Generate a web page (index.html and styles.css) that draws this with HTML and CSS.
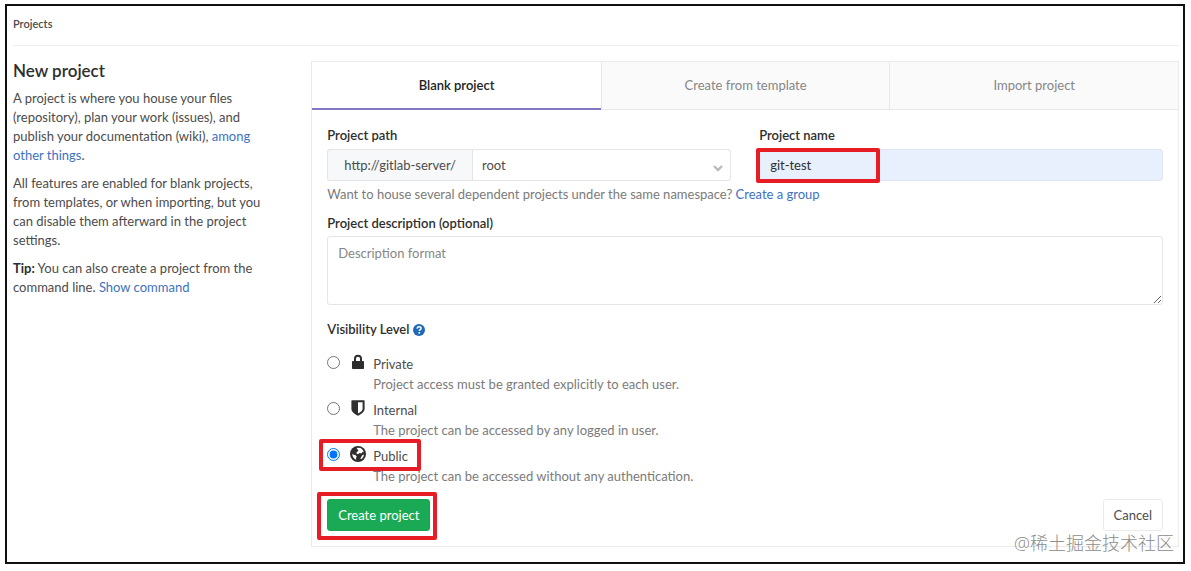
FILE: index.html
```html
<!DOCTYPE html>
<html lang="en">
<head>
    <meta charset="UTF-8">
    <meta name="viewport" content="width=device-width, initial-scale=1.0">
    <title>New project</title>
    <link rel="stylesheet" href="styles.css">
</head>
<body>
    <div class="page">
        <header class="breadcrumbs"><a href="#">Projects</a></header>

        <div class="columns">
            <aside class="sidebar">
                <h1>New project</h1>
                <p>A project is where you house your files (repository), plan your work (issues), and publish your documentation (wiki), <a href="#">among other things</a>.</p>
                <p>All features are enabled for blank projects, from templates, or when importing, but you can disable them afterward in the project settings.</p>
                <p><strong>Tip:</strong> You can also create a project from the command line. <a href="#">Show command</a></p>
            </aside>

            <main class="panel">
                <nav class="tabs">
                    <a href="#" class="tab active">Blank project</a>
                    <a href="#" class="tab">Create from template</a>
                    <a href="#" class="tab">Import project</a>
                </nav>

                <form class="project-form">
                    <div class="fields">
                        <div class="field">
                            <label for="namespace">Project path</label>
                            <div class="path-group">
                                <span class="prefix">http://gitlab-server/</span>
                                <div class="select-wrap">
                                    <select id="namespace">
                                        <option>root</option>
                                    </select>
                                    <svg class="chevron" viewBox="0 0 10 8" width="10" height="8"><path d="M1 2l4 4 4-4" fill="none" stroke="#bbb" stroke-width="2.4"/></svg>
                                </div>
                            </div>
                        </div>
                        <div class="field">
                            <label for="name">Project name</label>
                            <div class="name-group">
                                <input type="text" id="name" class="name-input" value="git-test">
                                <span class="mark mark-name"></span>
                            </div>
                        </div>
                    </div>
                    <p class="help">Want to house several dependent projects under the same namespace? <a href="#">Create a group</a></p>

                    <label for="description" class="description-label">Project description (optional)</label>
                    <textarea id="description" placeholder="Description format"></textarea>

                    <fieldset class="visibility">
                        <legend>Visibility Level
                            <a href="#" class="help-icon" aria-label="Help">
                                <svg viewBox="0 0 12 12" width="12" height="12"><circle cx="6" cy="6" r="6" fill="#1f69b8"/><path d="M4.1 4.6C4.2 3.3 5 2.8 6.1 2.8c1.1 0 1.9.6 1.9 1.6C8 5.6 6.3 5.6 6.3 7.1" fill="none" stroke="#fff" stroke-width="1.5"/><rect x="5.4" y="8" width="1.7" height="1.6" fill="#fff"/></svg>
                            </a>
                        </legend>

                        <div class="option">
                            <input type="radio" name="visibility" id="private">
                            <svg class="icon" viewBox="0 0 16 16" width="16" height="16"><path d="M4 7V4.8a4 4 0 0 1 8 0V7h1.2c.5 0 .8.3.8.8v6.4c0 .5-.3.8-.8.8H2.8c-.5 0-.8-.3-.8-.8V7.8c0-.5.3-.8.8-.8zm2 0h4V4.8a2 2 0 0 0-4 0z" fill="#2e2e2e"/></svg>
                            <label for="private">Private</label>
                            <p>Project access must be granted explicitly to each user.</p>
                        </div>
                        <div class="option">
                            <input type="radio" name="visibility" id="internal">
                            <svg class="icon" viewBox="0 0 16 16" width="16" height="16"><path d="M1.4.8c0-.4.3-.6.6-.6h12c.4 0 .6.2.6.6v8c0 3.2-3.6 5.6-6.6 7-3-1.4-6.6-3.8-6.6-7zM8 2.2v11.4c2.400-1.200 4.600-2.800 4.600-4.800V2.200z" fill="#2e2e2e"/></svg>
                            <label for="internal">Internal</label>
                            <p>The project can be accessed by any logged in user.</p>
                        </div>
                        <div class="option">
                            <input type="radio" name="visibility" id="public" checked>
                            <svg class="icon" viewBox="0 0 16 16" width="16" height="16"><circle cx="8" cy="8" r="8" fill="#2e2e2e"/><path d="M7.400 1.800l3.200.3 2 1.700 1.300 2.400-1.500-.3-1 1.500-1.800-.5-1.600 1.300-1.500-.8.200-1.500 1.700-1-.4-1.500-1.400-.4zM2 7.800l1.600.9 1.800.4 1.300 1.500-.8 1.400.5 1.800-1.700-.8-1.700-2zM12.300 9.300l1.700-.7-.6 2.300-1.800 2-1.200.2.600-1.800z" fill="#fff"/></svg>
                            <label for="public">Public</label>
                            <p>The project can be accessed without any authentication.</p>
                            <span class="mark mark-public"></span>
                        </div>
                    </fieldset>

                    <div class="actions">
                        <div class="create-wrap">
                            <button type="submit" class="btn btn-create">Create project</button>
                            <span class="mark mark-create"></span>
                        </div>
                        <button type="button" class="btn btn-cancel">Cancel</button>
                    </div>
                </form>
            </main>
        </div>
        <div class="watermark">@稀土掘金技术社区</div>
    </div>
</body>
</html>
```
FILE: styles.css
```css
* {
    box-sizing: border-box;
}

body {
    margin: 4px 6px 0 5px;
    background-color: #fff;
    color: #4c4c4c;
    font: 13px/19px Lato, "Open Sans", sans-serif;
}

a {
    color: #3e72bf;
    text-decoration: none;
}

p {
    margin: 0;
}

.page {
    position: relative;
    padding: 0 4px 15px 6px;
    border: 2px solid #111;
}

/* Header */
.breadcrumbs {
    padding: 8px 0 12px;
    border-bottom: 1px solid #eee;
    font-size: 11px;
    font-weight: 600;
}

.breadcrumbs a {
    color: #4c4c4c;
}

.columns {
    display: grid;
    grid-template-columns: 1fr 3fr;
    gap: 9px;
    margin-top: 15px;
}

/* Sidebar */
.sidebar {
    padding-right: 30px;
}

.sidebar h1 {
    margin: 0 0 8px;
    color: #2e2e2e;
    font-size: 17px;
    font-weight: 600;
    line-height: 20px;
}

.sidebar p {
    margin-bottom: 9px;
}

.sidebar strong {
    color: #2e2e2e;
}

/* Panel */
.panel {
    border: 1px solid #ebebeb;
}

.tabs {
    display: grid;
    grid-template-columns: repeat(3, 1fr);
}

.tab {
    padding: 14px 0;
    border-left: 1px solid #e8e8e8;
    border-bottom: 1px solid #e8e8e8;
    background-color: #fafafa;
    color: #868686;
    text-align: center;
}

.tab.active {
    padding-bottom: 13px;
    border-left: none;
    border-bottom: 2px solid #8078c4;
    background-color: #fff;
    color: #222;
    font-weight: 600;
}

.project-form {
    padding: 16px 15px 15px;
}

.fields {
    display: grid;
    grid-template-columns: 1fr 1fr;
    gap: 28px;
}

.field > label,
.description-label,
.visibility legend {
    display: block;
    padding: 0;
    color: #2e2e2e;
    font-weight: 600;
}

.path-group,
.name-group {
    display: flex;
    position: relative;
    height: 32px;
    margin-top: 4px;
}

.prefix {
    padding: 6px 16px;
    border: 1px solid #e5e5e5;
    border-right: none;
    border-radius: 3px 0 0 3px;
    background-color: #f7f8f9;
}

.select-wrap {
    display: flex;
    flex: 1;
    position: relative;
}

.select-wrap select {
    flex: 1;
    padding: 0 9px;
    border: 1px solid #e5e5e5;
    border-radius: 0 3px 3px 0;
    background-color: #fff;
    color: #4c4c4c;
    font: inherit;
    appearance: none;
}

.chevron {
    position: absolute;
    top: 15px;
    right: 8px;
}

.name-input {
    flex: 1;
    min-width: 0;
    padding: 0 10px;
    border: 1px solid #dfe5f1;
    border-radius: 3px;
    background-color: #e8effd;
    color: #2e2e2e;
    font: inherit;
}

.help {
    margin: 4px 0 10px;
    color: #7b7b7b;
}

textarea {
    display: block;
    width: 100%;
    height: 69px;
    margin-top: 3px;
    padding: 7px 10px;
    border: 1px solid #e5e5e5;
    border-radius: 3px;
    font: inherit;
    resize: vertical;
}

textarea::placeholder {
    color: #868686;
}

/* Visibility options */
.visibility {
    margin: 15px 0 0;
    padding: 0;
    border: none;
}

.visibility legend {
    margin-bottom: 15px;
}

.help-icon svg {
    vertical-align: -2px;
}

.option {
    display: grid;
    position: relative;
    grid-template-columns: 23px 23px 1fr;
    margin-bottom: 6px;
    line-height: 20px;
}

.option input {
    width: 13px;
    height: 13px;
    margin: 2px 0 0;
}

.option p {
    grid-column: 3;
    color: #7b7b7b;
}

/* Buttons */
.actions {
    display: flex;
    justify-content: space-between;
    margin-top: 7px;
}

.create-wrap {
    position: relative;
}

.btn {
    height: 32px;
    padding: 0 10px;
    border: 1px solid #ebebeb;
    border-radius: 3px;
    background-color: #fff;
    color: #4c4c4c;
    font: inherit;
}

.btn-create {
    border-color: #1aa351;
    background-color: #1aaa55;
    color: #fff;
}

/* Red highlight boxes */
.mark {
    position: absolute;
    border: 4px solid #e81c24;
    border-radius: 2px;
    pointer-events: none;
}

.mark-name {
    top: -1px;
    left: -3px;
    width: 124px;
    height: 35px;
}

.mark-public {
    top: -7px;
    left: -8px;
    width: 102px;
    height: 32px;
}

.mark-create {
    top: -7px;
    right: -7px;
    bottom: -9px;
    left: -10px;
}

.watermark {
    position: absolute;
    right: 9px;
    bottom: 6px;
    color: #8c8c8c;
    font: 300 18px/26px "Open Sans", "Noto Sans CJK SC", sans-serif;
}
```
